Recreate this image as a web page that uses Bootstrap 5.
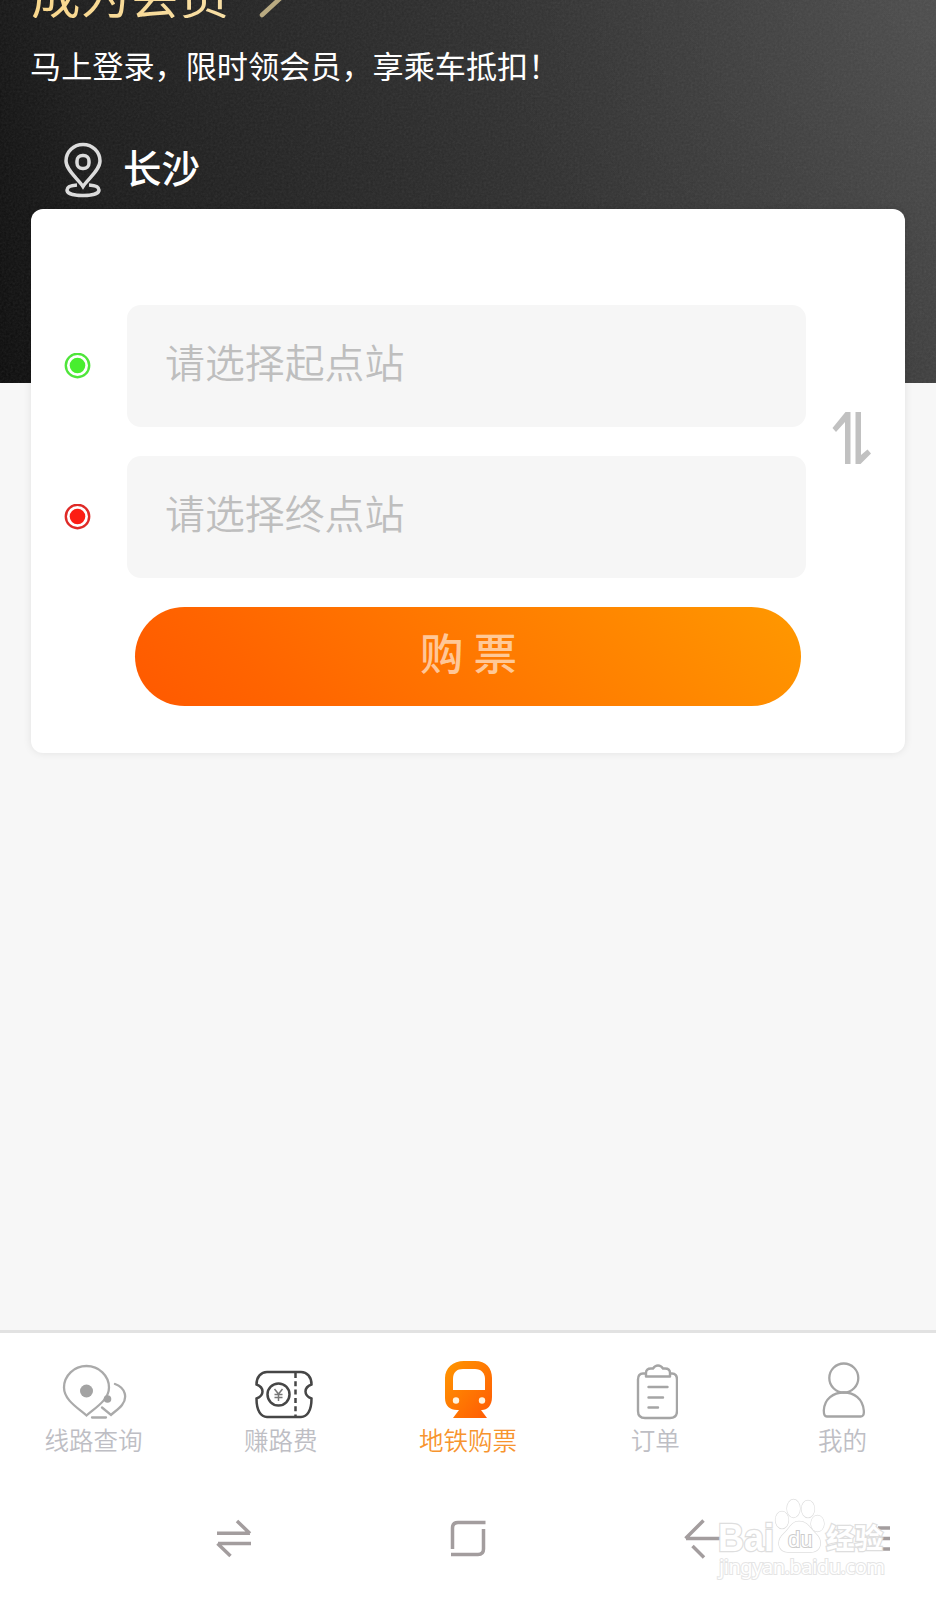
<!DOCTYPE html>
<html lang="zh-CN">
<head>
<meta charset="utf-8">
<meta name="viewport" content="width=device-width, initial-scale=1">
<title>地铁购票</title>
<link href="https://cdn.jsdelivr.net/npm/bootstrap@5.3.0/dist/css/bootstrap.min.css" rel="stylesheet">
<style>
body{font-family:"Noto Sans CJK SC",sans-serif;background:#f7f7f7;height:1600px;overflow:hidden}
svg{display:block;flex:none}
.hero{display:flow-root;height:383px;padding:0 31px;background:radial-gradient(ellipse 500px 420px at 100% 0,rgba(255,255,255,.05),transparent 90%),linear-gradient(75deg,#0b0b0b 0,#1b1b1b 15%,#282828 42%,#343434 68%,#434343 100%)}
.grain{inset:0;width:100%;height:100%;opacity:.1}
.vip{margin-top:-32px;height:50px;line-height:50px;font-size:49.5px;gap:27px}
.vip span{background:linear-gradient(90deg,#f9d78c,#f8dfa5);-webkit-background-clip:text;color:transparent}
.promo{height:46px;line-height:46px;margin-top:24px;margin-left:-1px;font-size:31.15px}
.city{height:60px;margin-top:52px;padding-left:32px;gap:20px;font-size:38.5px;font-weight:500;line-height:50px}
.city span{margin-top:-9px}
.ticket{margin:-174px 31px 0;height:544px;border-radius:12px;padding:96px 31px 0 33px;box-shadow:0 0 9px rgba(0,0,0,.09)}
.station{height:122px;width:679px;border-radius:14px;background:#f6f6f6;padding:32px 38px;font-size:39.9px;font-weight:350;line-height:48px;color:#bebebe}
.stops{gap:29px}
.stoprow{gap:36px}
.swap{margin-top:107px}
.buy{width:666px;height:99px;margin:29px 0 0 71px;border:0;border-radius:50px;background:linear-gradient(45deg,#ff5900,#ff6400 20%,#ff9700 98%);color:rgba(255,255,255,.6);font-size:43.5px;font-weight:500;line-height:85px;padding:0 0 10px 1px}
.gapfill{height:577px}
.tabs{height:137px;border-top:3px solid #e2e2e2;background:#fff}
.tab{padding-top:28px;font-size:24.5px;font-weight:350;line-height:36px;color:#bebec4}
.tab svg{margin-bottom:1px}
.tab.on{color:#f7942e}
.syskeys{height:133px;background:#fff}
.brand{left:716px;top:1498px;width:174px}
</style>
</head>
<body>
<header class="hero position-relative text-white">
  <svg class="grain position-absolute"><filter id="n"><feTurbulence type="fractalNoise" baseFrequency=".45" numOctaves="2"/><feColorMatrix type="saturate" values="0"/></filter><rect width="100%" height="100%" filter="url(#n)"/></svg>
  <div class="position-relative">
    <div class="vip d-flex align-items-start"><span>成为会员</span>
      <svg width="32" height="50" viewBox="0 0 32 50" fill="none" stroke="#b9aa81" stroke-width="4.500" stroke-linecap="round"><path d="M6 1l24 24L6 47"/></svg></div>
    <div class="promo">马上登录，限时领会员，享乘车抵扣！</div>
    <div class="city d-flex align-items-center">
      <svg width="40" height="56" viewBox="0 0 40 56" fill="none" stroke="#dcdcdc" stroke-width="3.500"><path d="M20 44.500C15 37 3 28 3 19a17 16.500 0 0 1 34 0C37 28 25 37 20 44.500z"/><rect x="14" y="13.500" width="12" height="13" rx="5.500"/><path d="M14 43C7 43.500 4 45.500 4 48c0 3.500 7 5.500 16 5.500s16-2 16-5.500c0-2.500-3-4.500-10-5"/></svg>
      <span>长沙</span>
    </div>
  </div>
</header>
<main class="ticket bg-white position-relative">
  <div class="d-flex justify-content-between">
    <div class="stops d-flex flex-column">
      <div class="stoprow d-flex align-items-center"><svg width="27" height="27" viewBox="0 0 27 27"><circle cx="13.500" cy="12.500" r="11.700" fill="#fff" stroke="#4fe53b" stroke-width="2.400"/><circle cx="13.500" cy="12.500" r="7.800" fill="#48ee2f"/></svg><div class="station">请选择起点站</div></div>
      <div class="stoprow d-flex align-items-center"><svg width="27" height="27" viewBox="0 0 27 27"><circle cx="13.500" cy="12.500" r="11.700" fill="#fff" stroke="#df2a27" stroke-width="2.400"/><circle cx="13.500" cy="12.500" r="7.800" fill="#fc1d14"/></svg><div class="station">请选择终点站</div></div>
    </div>
    <svg class="swap" width="42" height="52" viewBox="0.500 0 42 52" fill="#c1c1c1"><path d="M14 0h5v52h-5.500V10L4.500 20 1 16zM24 0h5.500v43L36 37.500l3.500 4L29 52h-5z"/></svg>
  </div>
  <button class="buy btn d-block">购 票</button>
</main>
<div class="gapfill"></div>
<nav class="tabs d-flex text-center">
  <div class="tab col d-flex flex-column align-items-center"><svg width="66" height="60" viewBox="0 0 66 60" fill="none" stroke="#aaa" stroke-width="2.300" stroke-linecap="round"><path d="M25.500 54.500C17 47 3 39 3 26.500a22.500 21.500 0 0 1 45 0C48 39 34 47 25.500 54.500zM54 23c11 4 12.500 14 7 21-3 4-8 7-11 10l-9-7.500M31 56.500h14"/><g fill="#a3a3a3" stroke="none"><circle cx="25.500" cy="30" r="6.500"/><circle cx="46.500" cy="38" r="3.800"/></g></svg>线路查询</div>
  <div class="tab col d-flex flex-column align-items-center"><svg width="60" height="60" viewBox="-4 0 60 60" fill="none" stroke="#464646" stroke-width="2.500" overflow="visible"><path d="M12 11h34c6 0 10.500 5 10.500 12.500-8 3-8 11 0 14C56.500 50 52 56 46 56H12C6 56 1.500 50 1.500 37.500c8-3 8-11 0-14C1.500 16 6 11 12 11z"/><circle cx="23.500" cy="33.500" r="11"/><path d="M40.500 12v43" stroke-dasharray="5 3.300"/><path d="M19.500 28l4 5 4-5M23.500 33v7M19.500 33.500h8M19.500 36.500h8" stroke-width="1.500" stroke="#777"/></svg>赚路费</div>
  <div class="tab on col d-flex flex-column align-items-center"><svg width="48" height="60" viewBox="-1 1 48 60"><defs><linearGradient id="t" x2="1" y2="1"><stop stop-color="#ff9700"/><stop offset="1" stop-color="#ff5a05"/></linearGradient></defs><path fill="url(#t)" d="M19 1h11c11 0 17 7 17 17v19c0 9-5 13-10 13h-1l6 8H8l6-8h-2C5 50 0 46 0 38V18C0 8 8 1 19 1z"/><path fill="#fff" d="M8 30V19c0-7 4-10 10-10h12c6 0 10 4 10 10v11z"/><circle cx="11" cy="40.500" r="3.200" fill="#fff3df"/><circle cx="37" cy="40.500" r="3.200" fill="#fff3df"/></svg>地铁购票</div>
  <div class="tab col d-flex flex-column align-items-center"><svg width="46" height="60" viewBox="-1 0 46 60" fill="none" stroke="#a5a5a5" stroke-width="2.400" stroke-linecap="round" stroke-linejoin="round"><path d="M12 12.500H10q-5 0-5 6V50q0 7 7 7h25q7 0 7-7V18.500q0-6-5-6h-2M13 15.500V12q0-4.500 5-4.500h2q2-3 5-3t5 3h2q5 0 5 4.500v3.500zM15.500 26H34.500M15.500 36.500H30M15.500 46.500H25"/></svg>订单</div>
  <div class="tab col d-flex flex-column align-items-center"><svg width="46" height="60" viewBox="-0.800 0 46 60" fill="none" stroke="#a5a5a5" stroke-width="2.300"><circle cx="24" cy="17" r="14.500"/><path d="M7 55.500h34q3.500 0 3-6C43 38 34.500 31.500 24 31.500S4.500 38 4 49.500q0 6 3 6z"/></svg>我的</div>
</nav>
<footer class="syskeys">
  <svg width="936" height="130" viewBox="0 1467 936 130" fill="none" stroke="#a39d9e" stroke-width="3.500"><path d="M217 1533.200h33M237 1521l13 12.500M251 1543.500h-33M230.500 1556l-13-12.500M452.500 1549v-21q0-5.500 5.500-5.500h27.500M483.500 1529v20q0 5.500-5.500 5.500h-27M720 1538.500h-34M703.500 1520.500l-18 18M692.500 1546l11.500 11.500M878 1528h12M880 1538.500h10M878 1549h12"/></svg>
</footer>
<div class="brand position-absolute"><svg width="174" height="92" viewBox="716 1498 174 92" fill="#fff" stroke="#dedede" stroke-width="1.200" paint-order="stroke">
  <text x="718" y="1551" font-family="Liberation Sans" font-weight="700" font-size="38" stroke-width="2.500" textLength="56" lengthAdjust="spacingAndGlyphs">Bai</text>
  <g stroke-width="1.300"><ellipse cx="782" cy="1520" rx="6.500" ry="8.500"/><ellipse cx="793.500" cy="1508.500" rx="6.500" ry="9"/><ellipse cx="808" cy="1509" rx="6.500" ry="8.500"/><ellipse cx="817.500" cy="1523.500" rx="6.500" ry="8"/><path d="M799 1521.500c-8 0-9 7-15 12-9 8-5 18.500 4 18.500h23c9 0 13-10 5-18-6-5.500-8-12.500-17-12.500z"/></g>
  <text x="788" y="1547" font-family="Liberation Sans" font-size="22" stroke="#ccc" stroke-width="2">du</text>
  <text x="826" y="1549" font-family="Noto Sans CJK SC" font-weight="700" font-size="28.500" stroke-width="2.500">经验</text>
  <text x="719" y="1574" font-family="Noto Sans,sans-serif" font-size="20" stroke="#e5e5e5" stroke-width="2" textLength="166">jingyan.baidu.com</text>
</svg></div>
<script src="https://cdn.jsdelivr.net/npm/bootstrap@5.3.0/dist/js/bootstrap.bundle.min.js"></script>
</body>
</html>
